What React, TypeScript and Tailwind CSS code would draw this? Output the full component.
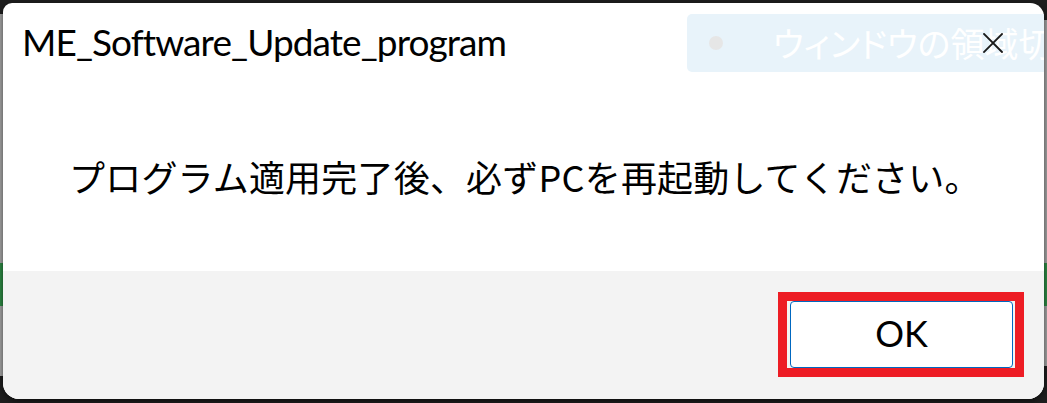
export default function App() {
  return (
    <div className="w-[1047px] h-[403px] bg-[#1e1e1e] flex overflow-hidden">
      {/* left edge of the window behind */}
      <div className="w-[3px] flex flex-col pt-[14px]">
        <div className="h-[249px] bg-[#a6a6a6]" />
        <div className="h-[43px] bg-[#2e8b45]" />
        <div className="h-[70px] bg-[#a6a6a6]" />
      </div>

      {/* dialog */}
      <div className="w-[1041px] mt-[3px] mb-[4px] flex flex-col bg-white rounded-tl-[9px] rounded-tr-[14px] rounded-b-[16px] overflow-hidden relative shadow-[0_2px_6px_rgba(0,0,0,0.6)]">
        {/* faded tooltip behind the title bar */}
        <div className="absolute left-[684px] top-[11px] w-[380px] h-[58px] rounded-[5px] bg-[#e8f3fa] flex items-center overflow-hidden">
          <div className="ml-[22px] w-[14px] h-[14px] shrink-0 rounded-full bg-[#e6e6e6]" />
          <span className="ml-[50px] text-[34px] leading-none whitespace-nowrap text-white [font-feature-settings:'palt'] font-['Noto_Sans_CJK_JP',sans-serif]">
            ウィンドウの領域切り
          </span>
        </div>

        {/* close button */}
        <button className="absolute left-[980px] top-[30px] w-[20px] h-[20px] flex items-center justify-center">
          <svg width="20" height="20" viewBox="0 0 20 20" fill="none" stroke="#1a1a1a" strokeWidth="1.8" strokeLinecap="square">
            <path d="M1 1L19 19M19 1L1 19" />
          </svg>
        </button>

        <div className="h-[268px] flex flex-col">
          <h1 className="pl-[19px] pt-[20px] text-[37px] tracking-[-0.9px] leading-none text-black font-['Lato','Noto_Sans',sans-serif]">
            ME_Software_Update_program
          </h1>
          <p className="mt-[98px] pl-[66px] text-[36px] tracking-[0.2px] leading-none text-black whitespace-nowrap font-['Noto_Sans_CJK_JP',sans-serif]">
            プログラム適用完了後、必ずPCを再起動してください。
          </p>
        </div>

        {/* footer */}
        <div className="flex-1 bg-[#f3f3f3] flex justify-end items-start pt-[21px] pr-[20px]">
          <div className="w-[246px] h-[85px] border-[9px] border-[#ed1c24] flex items-center pl-[3px]">
            <button className="w-[223px] h-[67px] bg-white border border-[#0067c0] rounded-[4px] text-[36px] leading-none text-black pb-[4px] font-['Lato','Noto_Sans',sans-serif]">
              OK
            </button>
          </div>
        </div>
      </div>

      {/* right edge */}
      <div className="w-[3px] flex flex-col pt-[20px]">
        <div className="h-[243px] bg-[#a3a3a3]" />
        <div className="h-[43px] bg-[#2e8b45]" />
        <div className="h-[60px] bg-[#a3a3a3]" />
      </div>
    </div>
  );
}
